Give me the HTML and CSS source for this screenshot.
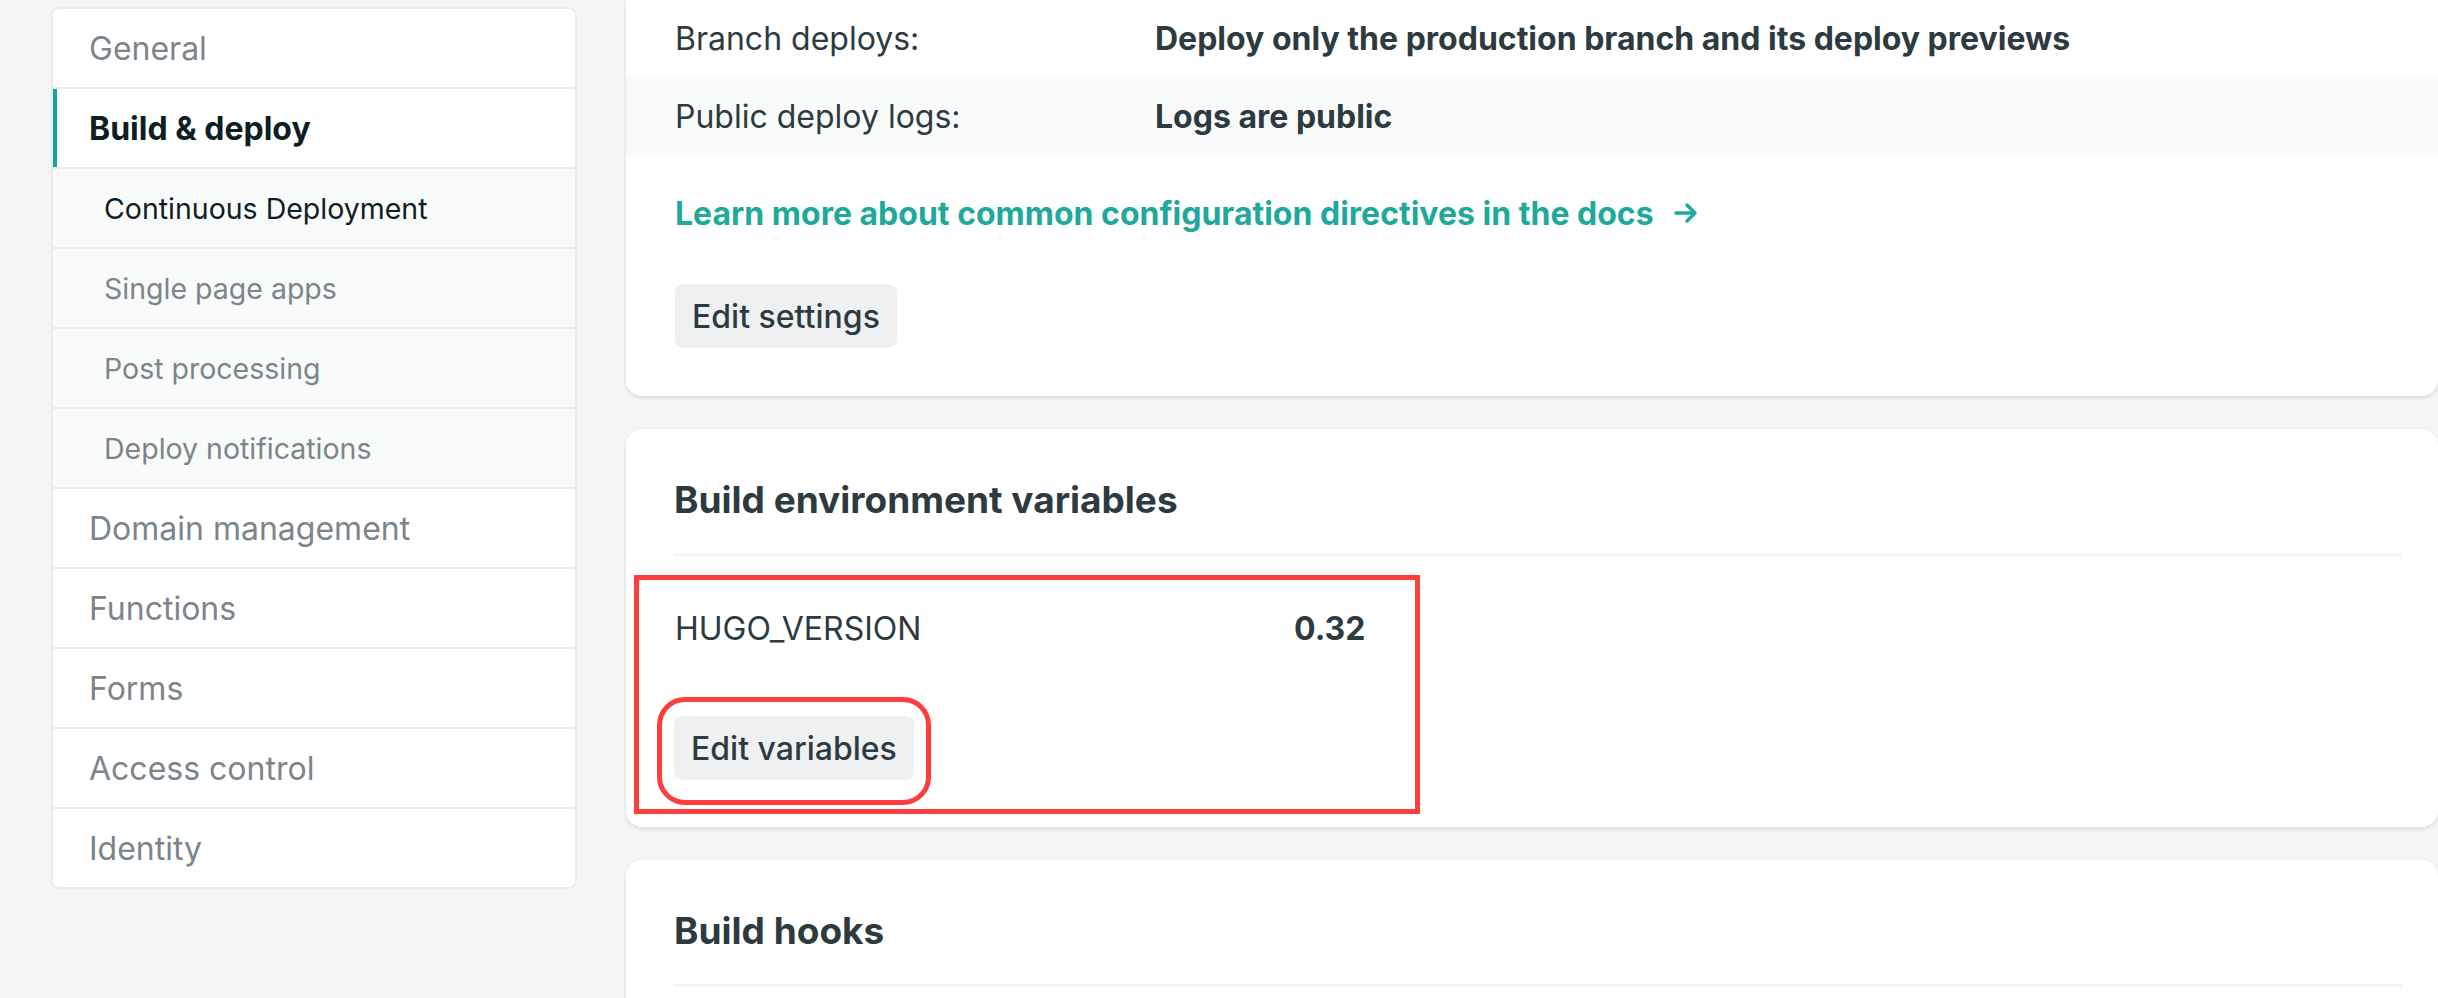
FILE: index.html
```html
<!DOCTYPE html>
<html lang="en">
<head>
<meta charset="utf-8">
<title>Build &amp; deploy settings</title>
<link rel="stylesheet" href="styles.css">
</head>
<body>
<div class="page">
  <nav class="sidenav">
    <a class="nav-item">General</a>
    <a class="nav-item active">Build &amp; deploy</a>
    <a class="nav-sub current">Continuous Deployment</a>
    <a class="nav-sub">Single page apps</a>
    <a class="nav-sub">Post processing</a>
    <a class="nav-sub">Deploy notifications</a>
    <a class="nav-item">Domain management</a>
    <a class="nav-item">Functions</a>
    <a class="nav-item">Forms</a>
    <a class="nav-item">Access control</a>
    <a class="nav-item last">Identity</a>
  </nav>

  <main class="content">
    <section class="card card-top">
      <div class="kv-row first">
        <span class="kv-label">Branch deploys:</span>
        <span class="kv-value">Deploy only the production branch and its deploy previews</span>
      </div>
      <div class="kv-row alt">
        <span class="kv-label">Public deploy logs:</span>
        <span class="kv-value">Logs are public</span>
      </div>
      <div class="card-body">
        <a class="doc-link">Learn more about common configuration directives in the docs
          <svg class="arrow" width="24" height="22" viewBox="0 0 24 22" aria-hidden="true"><path d="M2 11h19M13 3l8 8-8 8" fill="none" stroke="currentColor" stroke-width="3.4" stroke-linecap="round" stroke-linejoin="round"/></svg>
        </a>
        <button class="btn btn-settings">Edit settings</button>
      </div>
    </section>

    <section class="card card-env">
      <h2 class="card-title">Build environment variables</h2>
      <div class="env-row">
        <span class="env-key">HUGO_VERSION</span>
        <span class="env-val">0.32</span>
      </div>
      <button class="btn btn-vars">Edit variables</button>
      <div class="annot annot-box"></div>
      <div class="annot annot-round"></div>
    </section>

    <section class="card card-hooks">
      <h2 class="card-title">Build hooks</h2>
    </section>
  </main>
</div>
</body>
</html>
```

FILE: styles.css
```css
html, body {
  margin: 0;
  padding: 0;
}

body {
  background: #f3f5f6;
  font-family: Inter, "Noto Sans", "Liberation Sans", sans-serif;
  color: #2d3b41;
  height: 998px;
  overflow: hidden;
  -webkit-font-smoothing: antialiased;
}

.page {
  display: flex;
  align-items: flex-start;
  gap: 49px;
  padding-left: 51px;
}

/* Sidebar */
.sidenav {
  flex: 0 0 526px;
  box-sizing: border-box;
  margin-top: 7px;
  background: #fff;
  border: 2px solid #e9ebec;
  border-radius: 8px;
  overflow: hidden;
  display: flex;
  flex-direction: column;
}

.nav-item,
.nav-sub {
  display: flex;
  align-items: center;
  height: 78px;
  border-bottom: 2px solid #e9ebec;
  color: #7b858b;
  text-decoration: none;
  white-space: nowrap;
}

.nav-item {
  padding-left: 36px;
  font-size: 32px;
}

.nav-item.last {
  border-bottom: 0;
}

.nav-item.active {
  color: #0e1e25;
  font-weight: 700;
  box-shadow: inset 4px 0 0 #15a497;
}

.nav-sub {
  padding-left: 51px;
  font-size: 28.5px;
  background: #f9fafa;
}

.nav-sub.current {
  color: #0e1e25;
}

/* Content */
.content {
  flex: 1 1 auto;
  min-width: 0;
  display: flex;
  flex-direction: column;
  gap: 33px;
}

.card {
  position: relative;
  background: #fff;
  border-radius: 16px;
  box-shadow: 0 2px 4px rgba(14, 30, 37, 0.12);
  padding: 0 36px 47px 48px;
}

.card-top {
  border-radius: 0 0 16px 16px;
  padding: 0 0 48px 0;
}

.kv-row {
  display: flex;
  align-items: center;
  height: 80px;
  padding: 0 36px 0 49px;
  font-size: 32px;
  white-space: nowrap;
}

.kv-row.first {
  height: 76px;
}

.kv-row.alt {
  background: #f9fafa;
}

.kv-label {
  flex: 0 0 480px;
}

.kv-value {
  font-weight: 700;
}

.card-body {
  padding: 37px 36px 0 49px;
}

.doc-link {
  display: flex;
  align-items: center;
  gap: 20px;
  height: 40px;
  color: #1fa99a;
  font-size: 32px;
  font-weight: 700;
  text-decoration: none;
  white-space: nowrap;
}

.arrow {
  flex: 0 0 auto;
}

.btn {
  display: block;
  height: 64px;
  padding: 0 17px;
  border: 0;
  border-radius: 8px;
  background: #eff0f2;
  color: #2d3b41;
  font-family: inherit;
  font-size: 32px;
  font-weight: 500;
}

.btn-settings {
  margin-top: 51px;
}

.card-title {
  margin: 0;
  padding-top: 47px;
  padding-bottom: 29px;
  line-height: 48px;
  font-size: 37px;
  font-weight: 700;
  color: #2d3b41;
  border-bottom: 3px solid #f4f5f6;
}

.env-row {
  display: flex;
  align-items: center;
  height: 40px;
  margin-top: 52px;
  padding-left: 1px;
  font-size: 32px;
}

.env-key {
  flex: 0 0 619px;
}

.env-val {
  font-weight: 700;
}

.btn-vars {
  margin-top: 68px;
}

.card-hooks {
  padding-bottom: 120px;
}

/* Red annotation marks drawn over the card */
.annot {
  position: absolute;
  box-sizing: border-box;
  border: 5px solid #fd3e3e;
  pointer-events: none;
}

.annot-box {
  left: 8px;
  top: 146px;
  width: 786px;
  height: 239px;
}

.annot-round {
  left: 31px;
  top: 268px;
  width: 274px;
  height: 108px;
  border-radius: 28px;
}
```
